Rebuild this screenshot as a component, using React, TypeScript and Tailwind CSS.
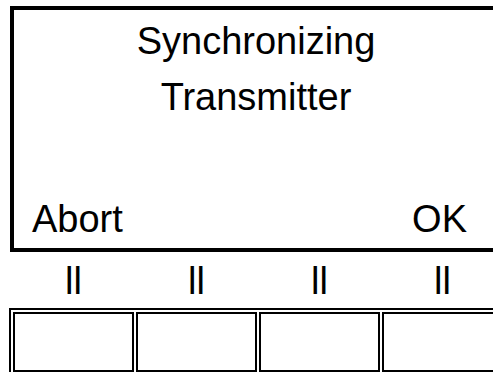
import React from "react";

const cells = [0, 1, 2, 3];

function Screen() {
  return (
    <div className="ml-[10px] mt-[6px] flex h-[246px] w-[492px] shrink-0 flex-col border-4 border-black">
      <div className="pt-[3px] text-center text-[38px] leading-[56px]">
        <p>Synchronizing</p>
        <p>Transmitter</p>
      </div>
      <div className="mt-auto flex items-end justify-between pb-[7px] pl-[18px] pr-[31px] text-[38px] leading-[44px]">
        <span>Abort</span>
        <span>OK</span>
      </div>
    </div>
  );
}

function SoftKeys() {
  return (
    <div className="mt-[7px] flex flex-col">
      <div className="ml-[13px] grid grid-cols-[repeat(4,121px)] gap-x-[2px] text-center text-[38px] leading-[44px]">
        {cells.map((i) => (
          <span key={i}>ll</span>
        ))}
      </div>
      <div className="ml-[9px] mt-[5px] w-[520px] border-l-2 border-t-2 border-black pl-[2px] pt-[2px]">
        <div className="grid grid-cols-[repeat(4,121px)] gap-x-[2px]">
          {cells.map((i) => (
            <div key={i} className="h-[60px] border-2 border-black" />
          ))}
        </div>
      </div>
    </div>
  );
}

export default function App() {
  return (
    <div
      className="h-[372px] w-[493px] overflow-hidden bg-white text-black"
      style={{ fontFamily: '"Liberation Sans", Arial, sans-serif' }}
    >
      <Screen />
      <SoftKeys />
    </div>
  );
}
